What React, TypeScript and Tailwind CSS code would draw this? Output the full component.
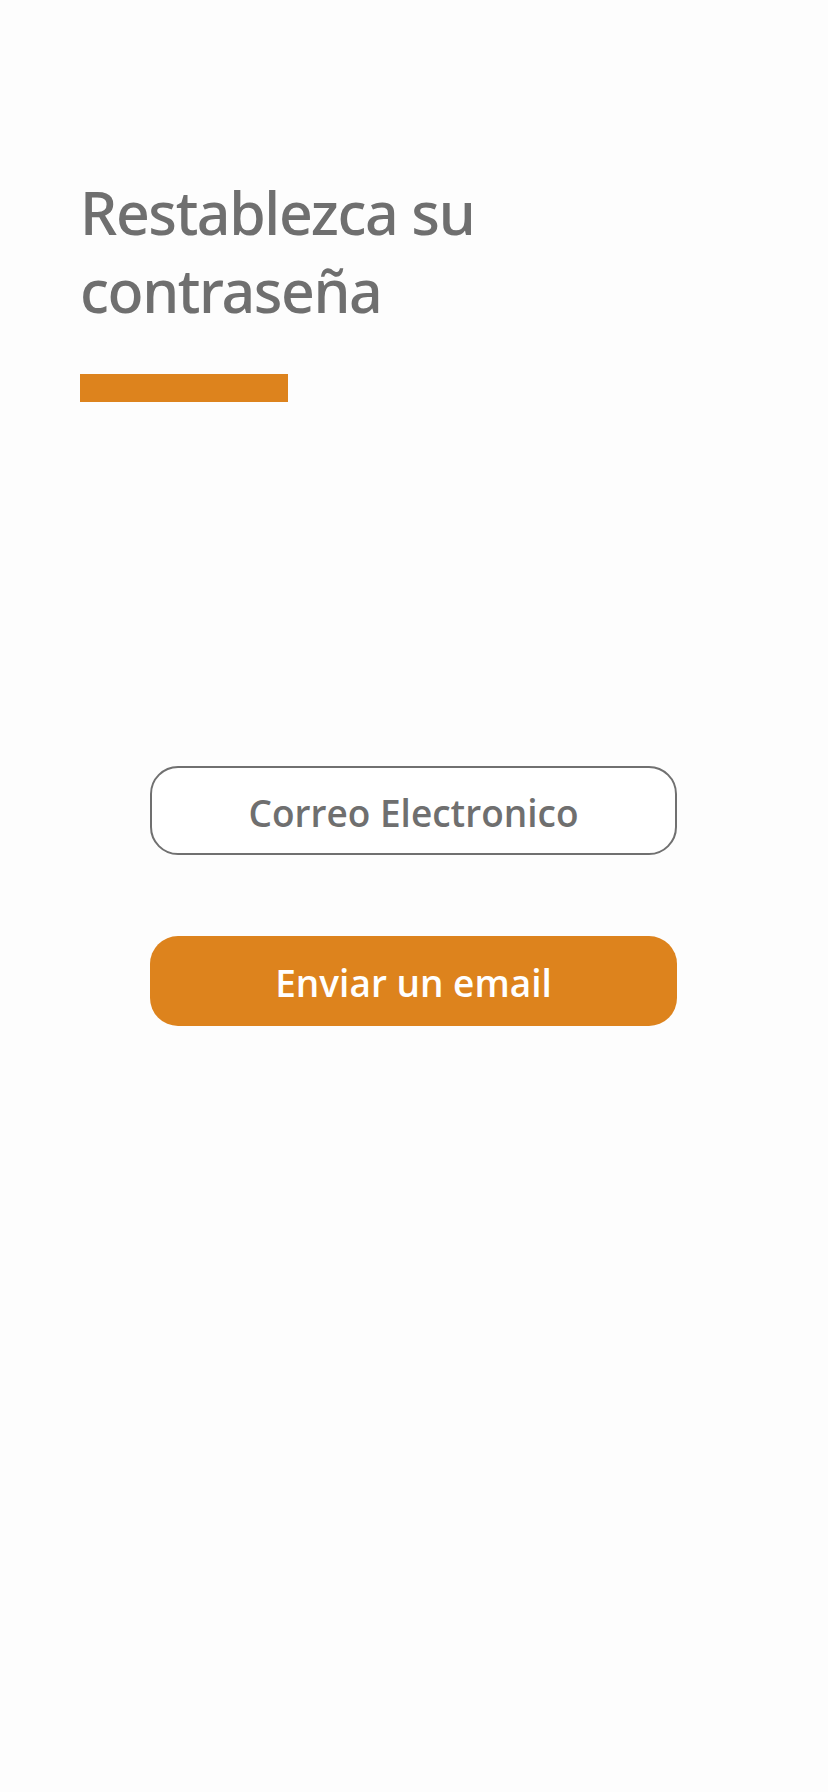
export default function App() {
  return (
    <div
      className="min-h-[1792px] w-full bg-[#fdfdfd]"
      style={{ fontFamily: '"Open Sans", "Noto Sans", sans-serif' }}
    >
      {/* Header */}
      <div className="px-[80px] pt-[173px]">
        <h1
          className="text-[59px] leading-[78px] font-medium text-[#6f6f6f] tracking-[-1.4px]"
          style={{ fontFamily: '"Noto Sans", "Open Sans", sans-serif' }}
        >
          Restablezca su
          <br />
          contraseña
        </h1>
        <div className="mt-[45px] h-[28px] w-[208px] bg-[#dd831d]" />
      </div>

      {/* Form */}
      <div className="mt-[364px] flex flex-col items-center gap-[81px] pl-[150px] pr-[151px]">
        <input
          type="text"
          placeholder="Correo Electronico"
          className="h-[89px] w-full rounded-[28px] border-2 border-[#707070] bg-white pt-[4px] text-center text-[37px] font-semibold text-[#6f6f6f] placeholder:text-[#6f6f6f] outline-none"
        />
        <button className="h-[90px] w-full rounded-[28px] bg-[#dd831d] pt-[4px] text-[37px] font-semibold text-white">
          Enviar un email
        </button>
      </div>
    </div>
  );
}
